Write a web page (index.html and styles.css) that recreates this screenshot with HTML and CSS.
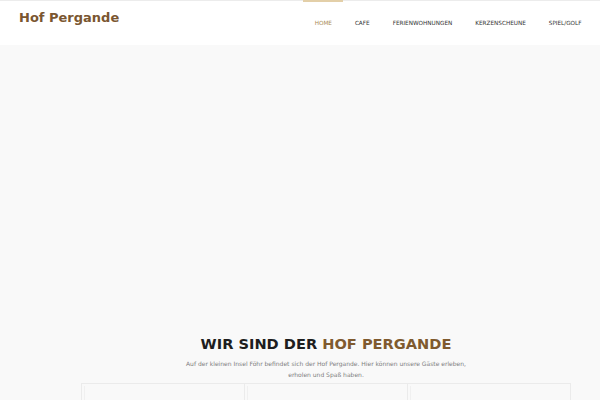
FILE: index.html
```html
<!DOCTYPE html>
<html lang="de">
<head>
<meta charset="utf-8">
<title>Hof Pergande</title>
<link rel="stylesheet" href="styles.css">
</head>
<body>
<header class="site-header">
  <div class="logo">Hof Pergande</div>
  <nav class="nav">
    <a class="nav-item active" href="#">Home</a>
    <a class="nav-item" href="#">Cafe</a>
    <a class="nav-item" href="#">Ferienwohnungen</a>
    <a class="nav-item" href="#">Kerzenscheune</a>
    <a class="nav-item" href="#">Spiel/Golf</a>
  </nav>
</header>
<main class="main">
  <section class="hero"></section>
  <section class="intro">
    <h1 class="intro-title">Wir sind der <span class="accent">Hof Pergande</span></h1>
    <p class="intro-text">Auf der kleinen Insel Föhr befindet sich der Hof Pergande. Hier können unsere Gäste erleben, erholen und Spaß haben.</p>
    <div class="cards">
      <div class="card"><div class="card-inner"></div></div>
      <div class="card"><div class="card-inner"></div></div>
      <div class="card"><div class="card-inner"></div></div>
    </div>
  </section>
</main>
</body>
</html>
```
FILE: styles.css
```css
html, body {
  margin: 0;
  padding: 0;
}
body {
  font-family: "DejaVu Sans", sans-serif;
  background: #f9f9f9;
  width: 600px;
  height: 400px;
  overflow: hidden;
}
.site-header {
  height: 44px;
  background: #ffffff;
  border-top: 1px solid #ececec;
  display: flex;
  justify-content: space-between;
  align-items: flex-start;
  padding: 0 7px 0 19px;
}
.logo {
  font-size: 13px;
  font-weight: bold;
  color: #7a5630;
  margin-top: 9px;
}
.nav {
  display: flex;
  margin-top: -1px;
}
.nav-item {
  display: block;
  font-size: 5.7px;
  text-transform: uppercase;
  color: #333333;
  text-decoration: none;
  padding: 18px 11.5px 0;
  height: 25px;
  border-top: 2px solid transparent;
}
.nav-item.active {
  color: #a88a55;
  border-top-color: #e3cfa8;
}
.main {
  padding-left: 81px;
  padding-right: 29px;
}
.hero {
  height: 288px;
}
.intro {
  text-align: center;
}
.intro-title {
  margin: 0;
  font-size: 14.6px;
  font-weight: bold;
  text-transform: uppercase;
  color: #1e1e1e;
  line-height: 22px;
}
.accent {
  color: #7f5a2e;
}
.intro-text {
  margin: 3px auto 0;
  width: 300px;
  font-size: 6px;
  line-height: 11px;
  color: #808080;
}
.cards {
  margin-top: 3px;
  display: grid;
  grid-template-columns: repeat(3, 1fr);
  border-left: 1px solid #ebebeb;
}
.card {
  border-top: 1px solid #ebebeb;
  border-right: 1px solid #ebebeb;
  height: 40px;
  padding: 2px 0 0 2px;
}
.card-inner {
  height: 100%;
  border-left: 1px solid #f0f0f0;
}
```
